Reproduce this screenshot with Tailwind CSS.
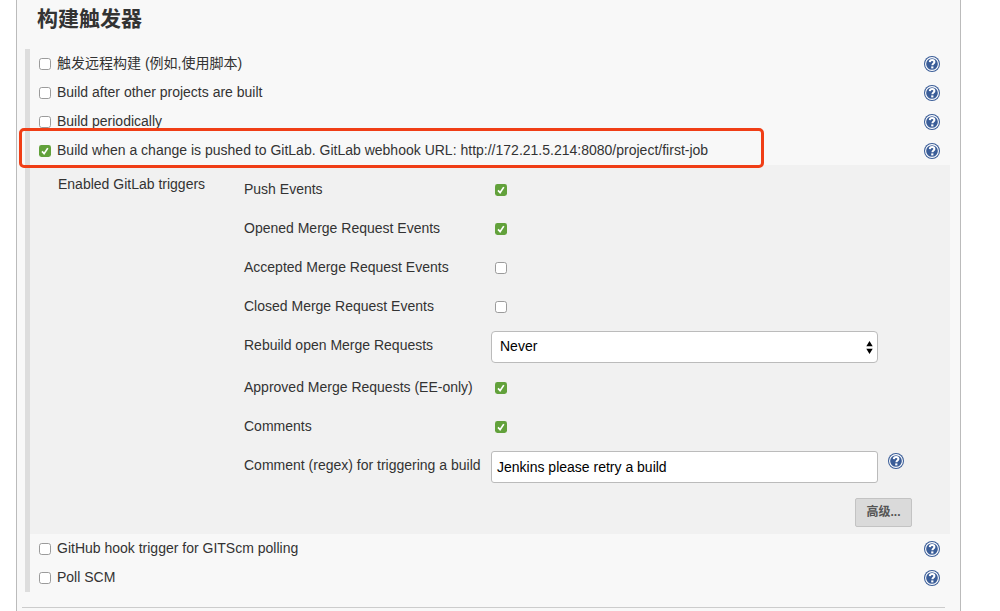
<!DOCTYPE html>
<html lang="zh-CN">
<head>
<meta charset="utf-8">
<title>构建触发器</title>
<script src="https://cdn.jsdelivr.net/npm/@tailwindcss/browser@4"></script>
</head>
<body class="bg-white h-[611px] overflow-hidden relative text-[14px] leading-[20px] text-[#333] font-['Liberation_Sans','Noto_Sans_CJK_SC',sans-serif]">
<svg class="hidden">
  <defs>
    <linearGradient id="blue" x1="0" y1="0" x2="1" y2="1"><stop offset="0.3" stop-color="#2a4f8e"/><stop offset="1" stop-color="#7fa9d8"/></linearGradient>
    <symbol id="help" viewBox="0 0 16 16">
      <circle cx="8" cy="8" r="8" fill="#3a5d98"/>
      <circle cx="8" cy="8" r="6.4" fill="url(#blue)" stroke="#fff" stroke-width="1.1"/>
      <path d="M5.8 6.1C5.9 4.5 6.8 4 8.1 4s2.3.7 2.3 1.9c0 1.6-2 1.6-2 3.3" fill="none" stroke="#fff" stroke-width="2"/>
      <rect x="7.2" y="10.4" width="2.2" height="2" fill="#fff"/>
    </symbol>
    <symbol id="on" viewBox="0 0 12 12">
      <rect width="12" height="12" rx="2.4" fill="#62a13b"/>
      <path d="M3 6.4 5.1 8.6 8.8 3.1" fill="none" stroke="#fff" stroke-width="1.7"/>
    </symbol>
    <symbol id="off" viewBox="0 0 12 12">
      <rect x=".5" y=".5" width="11" height="11" rx="2.2" fill="#fff" stroke="#9b9b9b"/>
    </symbol>
  </defs>
</svg>
<main class="ml-4 w-[945px] h-full bg-[#f8f8f8] border-x border-[#bbb]">
  <h1 class="h-[49px] pl-5 pt-[5px] text-[21px] leading-[28px] font-bold">构建触发器</h1>
  <section class="ml-2 w-[925px] border-l-[5px] border-[#ddd]">
    <div class="flex items-center h-[29px] pl-[9px] pr-[10px] pt-px"><svg class="size-3 mr-[6px]"><use href="#off"/></svg><span class="flex-1 -mt-0.5">触发远程构建 (例如,使用脚本)</span><svg class="size-4"><use href="#help"/></svg></div>
    <div class="flex items-center h-[29px] pl-[9px] pr-[10px] pt-px"><svg class="size-3 mr-[6px]"><use href="#off"/></svg><span class="flex-1 -mt-0.5">Build after other projects are built</span><svg class="size-4"><use href="#help"/></svg></div>
    <div class="flex items-center h-[29px] pl-[9px] pr-[10px] pt-px"><svg class="size-3 mr-[6px]"><use href="#off"/></svg><span class="flex-1 -mt-0.5">Build periodically</span><svg class="size-4"><use href="#help"/></svg></div>
    <div class="flex items-center h-[29px] pl-[9px] pr-[10px] pt-px"><svg class="size-3 mr-[6px]"><use href="#on"/></svg><span class="flex-1 -mt-0.5 tracking-[0.005px]">Build when a change is pushed to GitLab. GitLab webhook URL: http://172.21.5.214:8080/project/first-job</span><svg class="size-4"><use href="#help"/></svg></div>
    <div class="h-[369px] bg-[#f1f1f1] flex pl-7 pt-[5px]">
      <div class="w-[186px] pt-1">Enabled GitLab triggers</div>
      <div class="w-[668px]">
        <div class="flex items-center h-[39px]"><span class="w-[251px] -mt-0.5">Push Events</span><svg class="size-3"><use href="#on"/></svg></div>
        <div class="flex items-center h-[39px]"><span class="w-[251px] -mt-0.5">Opened Merge Request Events</span><svg class="size-3"><use href="#on"/></svg></div>
        <div class="flex items-center h-[39px]"><span class="w-[251px] -mt-0.5">Accepted Merge Request Events</span><svg class="size-3"><use href="#off"/></svg></div>
        <div class="flex items-center h-[39px]"><span class="w-[251px] -mt-0.5">Closed Merge Request Events</span><svg class="size-3"><use href="#off"/></svg></div>
        <div class="flex h-[42px] pt-[5px]"><span class="w-[247px] pt-1">Rebuild open Merge Requests</span>
          <div class="w-[387px] h-8 bg-white border border-[#bbb] rounded-[4px] flex items-center justify-between pl-2 pr-[4px] text-black"><span class="-mt-0.5">Never</span><svg class="w-[7px] h-[13px]" viewBox="0 0 7 13"><path d="M3.5 0 6.7 5.3H.3zM3.5 13 .3 7.7h6.4z"/></svg></div>
        </div>
        <div class="flex items-center h-[39px]"><span class="w-[251px] -mt-0.5">Approved Merge Requests (EE-only)</span><svg class="size-3"><use href="#on"/></svg></div>
        <div class="flex items-center h-[39px]"><span class="w-[251px] -mt-0.5">Comments</span><svg class="size-3"><use href="#on"/></svg></div>
        <div class="flex h-[42px] pt-[5px]"><span class="w-[247px] pt-1">Comment (regex) for triggering a build</span>
          <div class="w-[387px] h-8 bg-white border border-[#bbb] rounded-[3px] flex items-center pl-[5px] text-black">Jenkins please retry a build</div>
          <svg class="size-4 ml-[10px] mt-[2px]"><use href="#help"/></svg>
        </div>
        <div class="flex justify-end pt-[10px]"><div class="w-[57px] h-[29px] bg-[#dadada] border border-[#c3c3c3] rounded-[2px] flex items-center justify-center text-[12px] font-bold text-[#555]"><span class="-mt-0.5">高级...</span></div></div>
      </div>
    </div>
    <div class="flex items-center h-[29px] pl-[9px] pr-[10px] pt-px"><svg class="size-3 mr-[6px]"><use href="#off"/></svg><span class="flex-1 -mt-0.5">GitHub hook trigger for GITScm polling</span><svg class="size-4"><use href="#help"/></svg></div>
    <div class="flex items-center h-[29px] pl-[9px] pr-[10px] pt-px"><svg class="size-3 mr-[6px]"><use href="#off"/></svg><span class="flex-1 -mt-0.5">Poll SCM</span><svg class="size-4"><use href="#help"/></svg></div>
  </section>
  <div class="ml-[5px] mt-[15px] w-[923px] border-t border-[#ccc]"></div>
</main>
<div class="absolute left-[19px] top-[128px] w-[745px] h-10 border-[3px] border-[#f03e16] rounded-[5px]"></div>
</body>
</html>
